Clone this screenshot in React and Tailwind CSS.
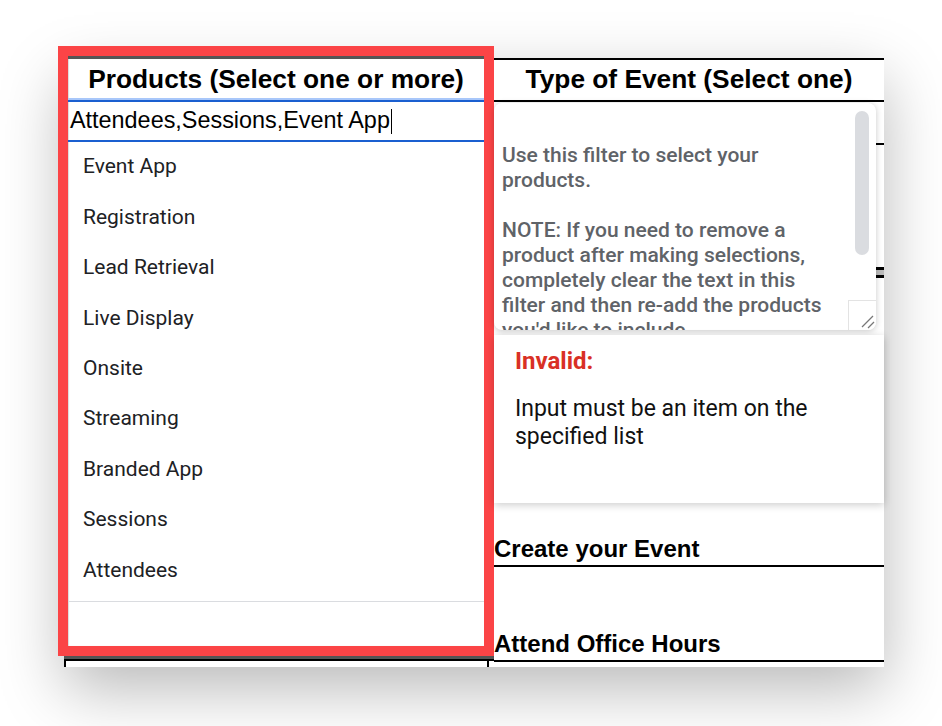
import React from 'react'

const products = [
    'Event App',
    'Registration',
    'Lead Retrieval',
    'Live Display',
    'Onsite',
    'Streaming',
    'Branded App',
    'Sessions',
    'Attendees',
]

function ResizeGrip() {
    return (
        <div className="absolute right-0 bottom-0 w-[28px] h-[30px] border-l border-t border-[#e3e3e3] bg-white">
            <svg width="28" height="30" viewBox="0 0 28 30" className="block">
                <path d="M13 26 L24 15" stroke="#777" strokeWidth="1.2" />
                <path d="M19 27 L25 21" stroke="#777" strokeWidth="1.2" />
            </svg>
        </div>
    )
}

function HelpTip() {
    return (
        <div className="absolute left-0 top-[45px] w-[382px] h-[227px] bg-white rounded-lg shadow-[0_1px_6px_rgba(0,0,0,0.22)] overflow-hidden">
            <div className="pl-[8px] pr-[34px] pt-[40px] text-[21px] leading-[25px] font-medium text-[#5f6368] font-['Roboto',sans-serif]">
                <p>Use this filter to select your products.</p>
                <p className="mt-[25px]">
                    NOTE: If you need to remove a product after making selections, completely clear the text in this
                    filter and then re-add the products you'd like to include.
                </p>
            </div>
            <div className="absolute right-[7px] top-[8px] w-[14px] h-[144px] rounded-full bg-[#dadce0]"></div>
            <ResizeGrip />
        </div>
    )
}

function InvalidNote() {
    return (
        <div className="absolute left-0 right-0 top-[277px] h-[168px] bg-white shadow-[0_2px_8px_rgba(0,0,0,0.2)] pl-[21px] pt-[12px] font-['Roboto',sans-serif] font-normal">
            <div className="text-[24px] leading-[28px] font-bold text-[#d93025]">Invalid:</div>
            <div className="mt-[20px] pr-[24px] text-[23px] leading-[28px] text-[#111]">
                Input must be an item on the specified list
            </div>
        </div>
    )
}

export default function App() {
    return (
        <div className="w-[942px] h-[726px] bg-white pt-[58px] pl-[64px]">
            <div className="w-[820px] h-[609px] bg-white flex shadow-[0_22px_60px_rgba(0,0,0,0.28)]">
                {/* left column: products cell with open dropdown */}
                <div className="w-[430px] flex flex-col">
                    <div className="-ml-[6px] -mt-[12px] w-[436px] h-[611px] border-[10px] border-[#fb4446] bg-white">
                        <div className="h-full flex flex-col border-t-[3px] border-t-[#555] shadow-[inset_1px_0_1px_rgba(0,0,0,0.15)]">
                            <div className="h-[39px] pt-[3px] flex items-center justify-center text-[26.3px] font-bold text-black font-['Liberation_Sans',Arial,sans-serif]">
                                Products (Select one or more)
                            </div>
                            <div className="h-[2px] bg-[#a8c7fa]"></div>
                            <div className="h-[2px] bg-[#1a5fd0]"></div>
                            <div className="h-[38px] flex items-center pl-[2px] text-[23.4px] text-black font-['Liberation_Sans',Arial,sans-serif]">
                                <span>Attendees,Sessions,Event App</span>
                                <span className="w-px h-[25px] bg-black ml-px"></span>
                            </div>
                            <div className="h-[2px] bg-[#1a5fd0]"></div>
                            <ul className="font-['Roboto',sans-serif] text-[21px] text-[#202124]">
                                {products.map((p) => (
                                    <li key={p} className="h-[50.4px] flex items-center pl-[15px]">
                                        {p}
                                    </li>
                                ))}
                            </ul>
                            <div className="mt-[5px] border-t border-[#dadce0]"></div>
                        </div>
                    </div>
                    <div className="h-[3px] bg-[#555]"></div>
                    <div className="h-[2px] bg-black"></div>
                    <div className="h-[6px] flex justify-between pr-[5px]">
                        <div className="w-[2px] h-full bg-black"></div>
                        <div className="w-[2px] h-full bg-black"></div>
                    </div>
                </div>

                {/* right column: type of event + links */}
                <div className="w-[390px] relative flex flex-col font-['Liberation_Sans',Arial,sans-serif] font-bold text-black">
                    <div className="h-[44px] border-y-2 border-black flex items-center justify-center text-[26.3px]">
                        Type of Event (Select one)
                    </div>
                    <div className="h-[43px] border-b-2 border-black"></div>
                    <div className="h-[125px] border-b-[3px] border-black"></div>
                    <div className="h-[5px] bg-[#bbb]"></div>
                    <div className="h-[3px] bg-black"></div>
                    <div className="h-[289px] border-b-2 border-black flex items-end pb-[4px] text-[24px] leading-none">
                        Create your Event
                    </div>
                    <div className="h-[95px] border-b-2 border-black flex items-end pb-[4px] text-[24px] leading-none">
                        Attend Office Hours
                    </div>
                    <HelpTip />
                    <InvalidNote />
                </div>
            </div>
        </div>
    )
}
